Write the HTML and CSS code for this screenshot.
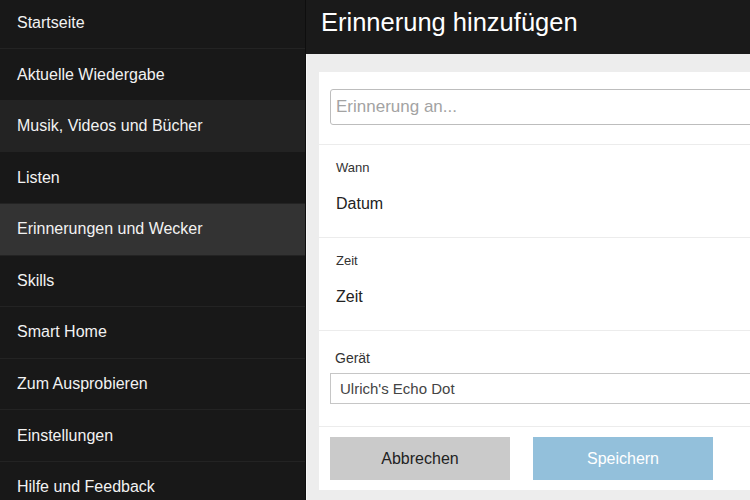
FILE: index.html
```html
<!DOCTYPE html>
<html lang="de">
<head>
    <meta charset="UTF-8">
    <title>Erinnerung hinzufügen</title>
    <link rel="stylesheet" href="styles.css">
</head>
<body>
    <div class="app">
        <nav class="sidebar">
            <a class="nav-item">Startseite</a>
            <a class="nav-item">Aktuelle Wiedergabe</a>
            <a class="nav-item hover">Musik, Videos und Bücher</a>
            <a class="nav-item">Listen</a>
            <a class="nav-item active">Erinnerungen und Wecker</a>
            <a class="nav-item">Skills</a>
            <a class="nav-item">Smart Home</a>
            <a class="nav-item">Zum Ausprobieren</a>
            <a class="nav-item">Einstellungen</a>
            <a class="nav-item">Hilfe und Feedback</a>
        </nav>

        <main class="main">
            <header class="topbar">
                <h1>Erinnerung hinzufügen</h1>
            </header>

            <div class="panel">
                <div class="card">
                    <div class="section first">
                        <input class="text-input" type="text" placeholder="Erinnerung an...">
                    </div>
                    <div class="section">
                        <div class="label">Wann</div>
                        <div class="value">Datum</div>
                    </div>
                    <div class="section">
                        <div class="label">Zeit</div>
                        <div class="value">Zeit</div>
                    </div>
                    <div class="section device">
                        <div class="label big">Gerät</div>
                        <div class="select">Ulrich's Echo Dot</div>
                    </div>
                    <div class="actions">
                        <button class="btn btn-cancel">Abbrechen</button>
                        <button class="btn btn-save">Speichern</button>
                    </div>
                </div>
            </div>
        </main>
    </div>
</body>
</html>
```

FILE: styles.css
```css
body { margin: 0; font-family: "Liberation Sans", Arial, sans-serif; background: #ececec; overflow: hidden; }
.app { display: flex; width: 750px; height: 500px; overflow: hidden; }

/* left navigation */
.sidebar { width: 306px; flex: none; background: #181818; border-right: 1px solid #0e0e0e; box-sizing: border-box; margin-top: -2.4px; }
.nav-item { display: flex; align-items: center; height: 51.6px; box-sizing: border-box; padding-left: 17px; border-bottom: 1px solid #232323; color: #f2f2f2; font-size: 16px; }
.nav-item.hover { background: #232323; }
.nav-item.active { background: #333; }

/* right column */
.main { flex: 1; display: flex; flex-direction: column; min-width: 0; }
.topbar { height: 54px; flex: none; background: #1a1a1a; display: flex; align-items: center; padding-left: 15px; }
.topbar h1 { margin: 0; color: #fff; font-weight: normal; font-size: 25.5px; padding-bottom: 9px; }

.panel { flex: 1; background: #ededed; padding: 18px 0 10px 12px; border-left: 1px solid #f7f7f7; }
.card { background: #fff; width: 460px; height: 100%; box-sizing: border-box; padding-left: 11px; }

.section { border-bottom: 1px solid #ececec; height: 93px; box-sizing: border-box; padding-top: 13px; margin-left: -11px; padding-left: 17px; }
.section.first { height: 73px; padding-top: 17px; padding-left: 11px; }
.label { font-size: 13px; color: #333; height: 20px; line-height: 20px; }
.label.big { font-size: 14px; height: 22px; line-height: 22px; padding-left: 5px; }
.value { font-size: 16px; color: #222; margin-top: 16px; line-height: 20px; }

.text-input { width: 100%; height: 36px; box-sizing: border-box; border: 1px solid #bdbdbd; border-radius: 3px; padding: 0 5px; font-family: inherit; font-size: 17px; color: #333; }
.text-input::placeholder { color: #a3a3a3; }

.section.device { height: 96px; padding-top: 16px; padding-left: 11px; }
.select { margin-top: 4px; height: 31px; box-sizing: border-box; border: 1px solid #c6c6c6; padding-left: 9px; line-height: 29px; font-size: 15px; color: #444; }

.actions { display: flex; gap: 23px; padding-top: 10px; }
.btn { width: 180px; height: 43px; border: none; font-family: inherit; font-size: 16px; cursor: pointer; }
.btn-cancel { background: #cacaca; color: #222; }
.btn-save { background: #93c0db; color: #fff; }
```
